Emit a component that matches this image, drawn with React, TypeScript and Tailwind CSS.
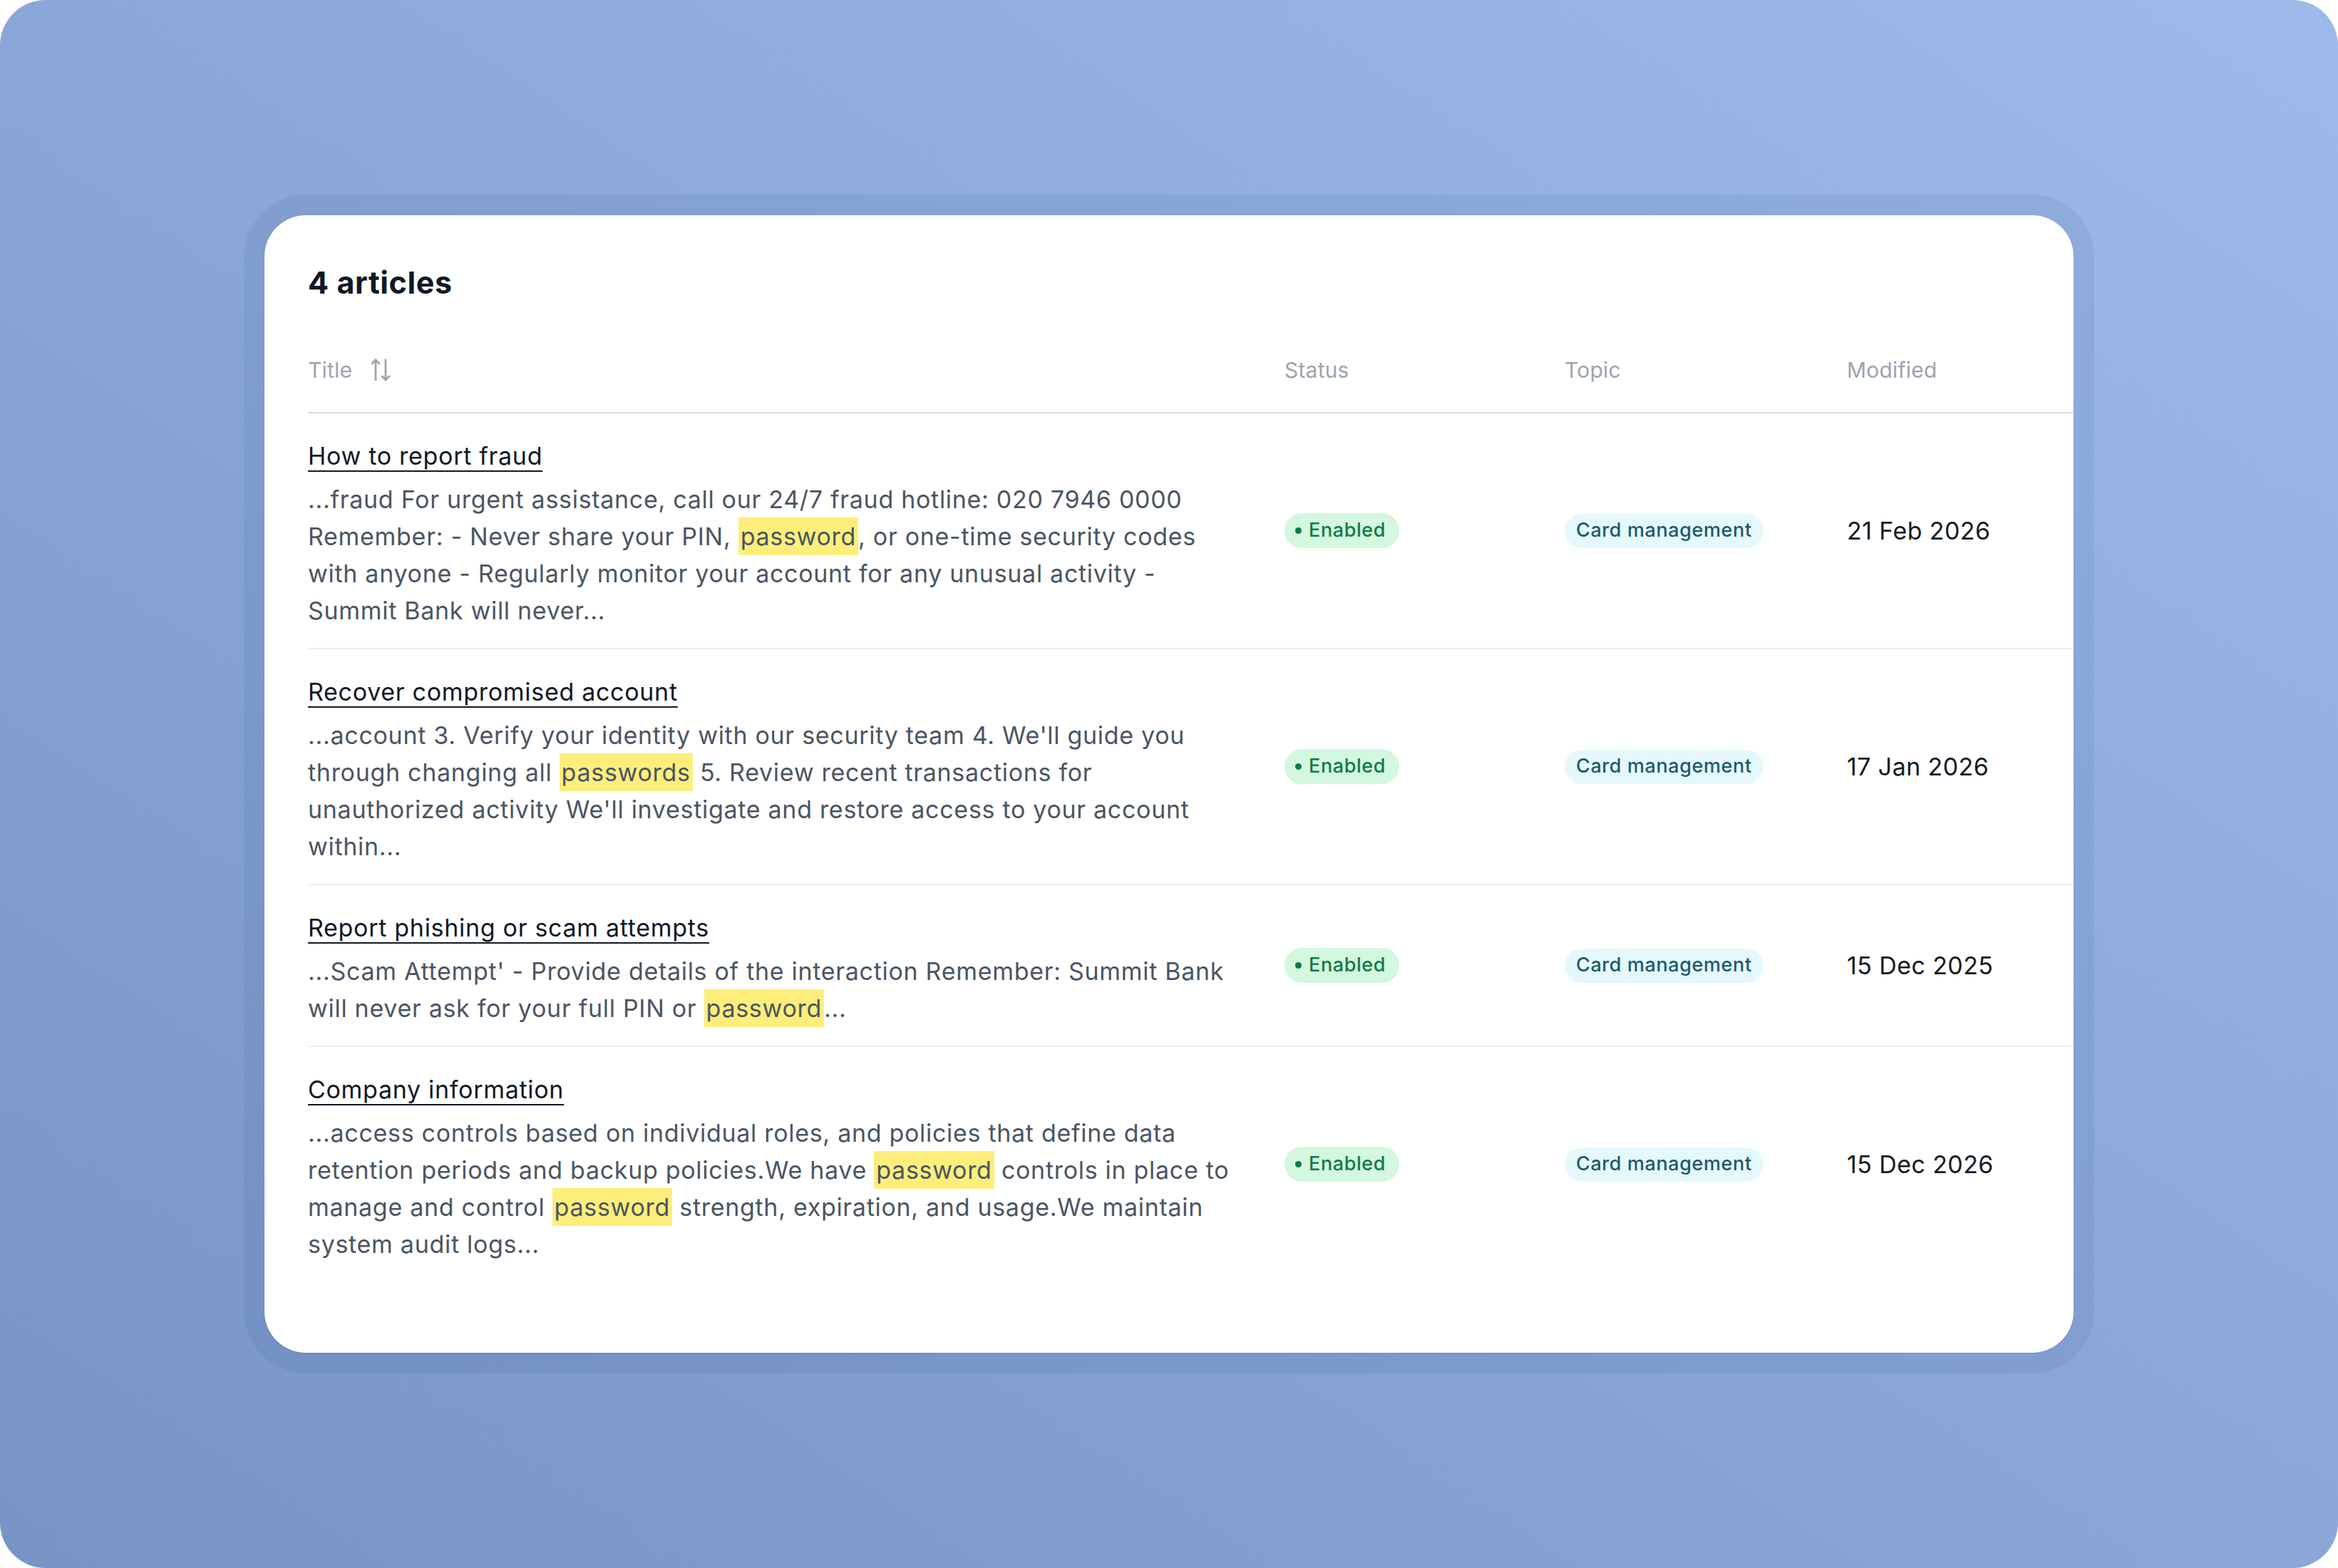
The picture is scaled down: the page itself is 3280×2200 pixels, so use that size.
import React from "react";

type Part = { t: string; hl?: boolean };
type Row = { title: string; parts: Part[]; date: string };

const rows: Row[] = [
  {
    title: "How to report fraud",
    parts: [
      { t: "...fraud For urgent assistance, call our 24/7 fraud hotline: 020 7946 0000 Remember: - Never share your PIN, " },
      { t: "password", hl: true },
      { t: ", or one-time security codes with anyone - Regularly monitor your account for any unusual activity - Summit Bank will never..." },
    ],
    date: "21 Feb 2026",
  },
  {
    title: "Recover compromised account",
    parts: [
      { t: "...account 3. Verify your identity with our security team 4. We'll guide you through changing all " },
      { t: "passwords", hl: true },
      { t: " 5. Review recent transactions for unauthorized activity We'll investigate and restore access to your account within..." },
    ],
    date: "17 Jan 2026",
  },
  {
    title: "Report phishing or scam attempts",
    parts: [
      { t: "...Scam Attempt' - Provide details of the interaction Remember: Summit Bank will never ask for your full PIN or " },
      { t: "password", hl: true },
      { t: "..." },
    ],
    date: "15 Dec 2025",
  },
  {
    title: "Company information",
    parts: [
      { t: "...access controls based on individual roles, and policies that define data retention periods and backup policies.We have " },
      { t: "password", hl: true },
      { t: " controls in place to manage and control " },
      { t: "password", hl: true },
      { t: " strength, expiration, and usage.We maintain system audit logs..." },
    ],
    date: "15 Dec 2026",
  },
];

function SortIcon() {
  return (
    <svg width="28" height="34" viewBox="0 0 20 24" fill="none" stroke="currentColor" strokeWidth="2" strokeLinecap="round" strokeLinejoin="round">
      <path d="M5 22V2" />
      <path d="m1.5 5.5 3.5-3.5 3.5 3.5" />
      <path d="M15 2v20" />
      <path d="m11.5 18.5 3.5 3.5 3.5-3.5" />
    </svg>
  );
}

export default function App() {
  return (
    <div className="w-[3280px] h-[2200px] bg-white font-['Inter',sans-serif]">
      <div className="w-full h-full rounded-[64px] bg-linear-to-tr from-[#7794c5] to-[#9dbaea] flex items-center justify-center">
        <div className="p-[29px] rounded-[88px] bg-[#1e3a78]/[0.08]">
          <div className="w-[2538px] h-[1596px] rounded-[58px] bg-white pt-[68px] pl-[61px] shadow-[0_1px_2px_rgba(30,50,100,0.12)]">
            <h2 className="text-[43px] leading-[52px] font-bold text-[#111827] tracking-[0.6px]">4 articles</h2>
            <div className="mt-[38px]">
              <div className="grid grid-cols-[1370px_393px_396px_1fr] h-[120px] items-center border-b-2 border-[#d6dce2] text-[30px] text-[#9ca3af] tracking-[0.2px]">
                <div className="flex items-center gap-[26px]">
                  <span>Title</span>
                  <SortIcon />
                </div>
                <div>Status</div>
                <div>Topic</div>
                <div>Modified</div>
              </div>
              {rows.map((r, i) => (
                <div
                  key={i}
                  className={
                    "grid grid-cols-[1370px_393px_396px_1fr] items-center " +
                    (i < rows.length - 1 ? "border-b-2 border-[#eceff2]" : "")
                  }
                >
                  <div className="pt-[34px] pb-[26px] pr-[66px]">
                    <div className="text-[34px] leading-[51px] text-[#111827] tracking-[0.7px]">
                      <span className="underline decoration-2 underline-offset-[8px]">{r.title}</span>
                    </div>
                    <div className="mt-[10px] text-[34px] leading-[52px] text-[#4b5563] tracking-[0.7px]">
                      {r.parts.map((p, j) =>
                        p.hl ? (
                          <span key={j} className="bg-[#fdee7c] px-[3px] py-[6px]">
                            {p.t}
                          </span>
                        ) : (
                          <span key={j}>{p.t}</span>
                        )
                      )}
                    </div>
                  </div>
                  <div>
                    <span className="inline-flex items-center h-[49px] pl-[15px] pr-[19px] gap-[10px] rounded-full bg-[#d3f7df] text-[#0f7a47] text-[27px] font-medium tracking-[0.6px]">
                      <span className="w-[9px] h-[9px] rounded-full bg-[#0f7a47]" />
                      Enabled
                    </span>
                  </div>
                  <div>
                    <span className="inline-flex items-center h-[48px] px-[16px] rounded-full bg-[#e5f8fc] text-[#1d5a6b] text-[27px] font-medium tracking-[0.6px]">
                      Card management
                    </span>
                  </div>
                  <div className="text-[34px] text-[#161b26] tracking-[0.4px]">{r.date}</div>
                </div>
              ))}
            </div>
          </div>
        </div>
      </div>
    </div>
  );
}
